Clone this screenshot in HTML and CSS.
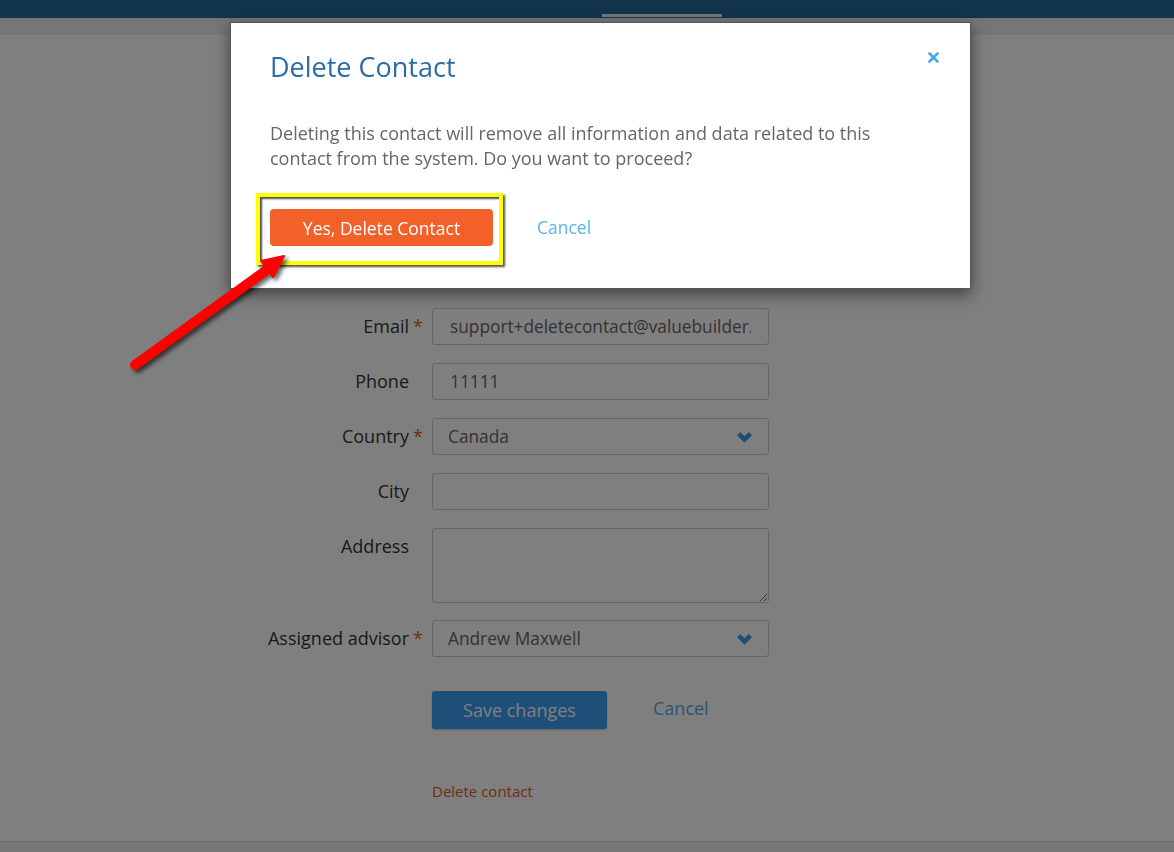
FILE: index.html
```html
<!DOCTYPE html>
<html lang="en">
<head>
  <meta charset="UTF-8">
  <title>Edit contact</title>
  <link rel="stylesheet" href="styles.css">
</head>
<body>

  <div class="topbar">
    <span class="tab-active"></span>
  </div>
  <div class="subbar"></div>

  <div class="contenido">
    <div class="formulario">
      <label class="etiqueta">Email <span class="req">*</span></label>
      <input class="campo" type="text" value="support+deletecontact@valuebuilder.com">

      <label class="etiqueta">Phone</label>
      <input class="campo" type="text" value="11111">

      <label class="etiqueta">Country <span class="req">*</span></label>
      <div class="campo select">
        <span>Canada</span>
        <svg class="chevron" width="15" height="11" viewBox="0 0 15 11"><path d="M1 3.2 L3.2 1 L7.5 5.3 L11.8 1 L14 3.2 L7.5 9.7 Z" fill="#3a9ee6" stroke="#3a9ee6" stroke-width="1.4" stroke-linejoin="round"/></svg>
      </div>

      <label class="etiqueta">City</label>
      <input class="campo" type="text" value="">

      <label class="etiqueta">Address</label>
      <textarea class="campo area"></textarea>

      <label class="etiqueta">Assigned advisor <span class="req">*</span></label>
      <div class="campo select">
        <span>Andrew Maxwell</span>
        <svg class="chevron" width="15" height="11" viewBox="0 0 15 11"><path d="M1 3.2 L3.2 1 L7.5 5.3 L11.8 1 L14 3.2 L7.5 9.7 Z" fill="#3a9ee6" stroke="#3a9ee6" stroke-width="1.4" stroke-linejoin="round"/></svg>
      </div>

      <div></div>
      <div class="acciones">
        <button class="btn-guardar">Save changes</button>
        <a class="enlace">Cancel</a>
      </div>

      <div></div>
      <a class="borrar">Delete contact</a>
    </div>
  </div>

  <div class="pie"></div>

  <!-- fondo oscuro del modal -->
  <div class="overlay"></div>

  <div class="modal">
    <h2>Delete Contact</h2>
    <svg class="cerrar" width="11" height="11" viewBox="0 0 11 11"><path d="M1.5 1.5 L9.5 9.5 M9.5 1.5 L1.5 9.5" stroke="#4aa6ea" stroke-width="2.6" stroke-linecap="round"/></svg>
    <p>Deleting this contact will remove all information and data related to this contact from the system. Do you want to proceed?</p>
    <div class="acciones-modal">
      <button class="btn-borrar">Yes, Delete Contact</button>
      <a class="enlace-modal">Cancel</a>
    </div>
    <!-- recuadro amarillo de la captura -->
    <div class="resaltado"></div>
  </div>

  <svg class="flecha" width="300" height="400" viewBox="0 0 300 400">
    <line x1="135" y1="365" x2="268" y2="269" stroke="#ff0000" stroke-width="10" stroke-linecap="round"/>
    <polygon points="284,256 273,277 261,261" fill="#ff0000" stroke="#ff0000" stroke-width="2" stroke-linejoin="round"/>
  </svg>

</body>
</html>
```

FILE: styles.css
```css
body {
  margin: 0;
  font-family: "Open Sans", "Liberation Sans", sans-serif;
  background: #fff;
  color: #333;
}
.topbar {
  height: 18px;
  background: #24689a;
  position: relative;
}
.tab-active {
  position: absolute;
  left: 602px;
  top: 14px;
  width: 120px;
  height: 3px;
  background: #eee;
}
.subbar {
  height: 17px;
  background: #ececec;
}
.contenido {
  height: 806px;
  padding-top: 273px;
  box-sizing: border-box;
  padding-left: 250px;
}
.formulario {
  display: grid;
  grid-template-columns: 174px 337px;
  column-gap: 8px;
  row-gap: 18px;
  align-items: start;
}
.etiqueta {
  position: relative;
  text-align: right;
  padding-right: 15px;
  font-size: 18px;
  line-height: 36px;
  color: #333;
}
.req {
  position: absolute;
  right: 1px;
  top: 0;
  color: #e8582a;
}
.campo {
  box-sizing: border-box;
  height: 37px;
  width: 337px;
  border: 1px solid #ccc;
  border-radius: 3px;
  padding: 0 17px;
  font-family: "Open Sans", "Liberation Sans", sans-serif;
  font-size: 17.3px;
  color: #666;
  background: #fff;
  margin: 0;
}
.select {
  display: flex;
  align-items: center;
  justify-content: space-between;
  padding-left: 15px;
  padding-right: 16px;
}
.chevron {
  margin-top: 1px;
}
.area {
  height: 75px;
  resize: vertical;
  padding-top: 8px;
  margin-bottom: -1px;
}
.acciones {
  display: flex;
  align-items: center;
  gap: 46px;
  margin-top: 16px;
}
.btn-guardar {
  width: 175px;
  height: 38px;
  border: none;
  border-radius: 3px;
  background: #3a9ef0;
  color: #fff;
  font-family: "Open Sans", "Liberation Sans", sans-serif;
  font-size: 18px;
  box-shadow: 0 1px 2px rgba(0, 0, 0, 0.25);
}
.enlace {
  font-size: 18px;
  color: #5aa8e4;
  margin-top: -4px;
}
.borrar {
  font-size: 15px;
  color: #e8562a;
  margin-top: 34px;
}
.pie {
  border-top: 1px solid #dcdcdc;
  background: #eee;
  height: 40px;
}
.overlay {
  position: fixed;
  left: 0;
  top: 0;
  right: 0;
  bottom: 0;
  background: rgba(0, 0, 0, 0.5);
}
.modal {
  position: absolute;
  left: 230px;
  top: 22px;
  width: 741px;
  height: 267px;
  box-sizing: border-box;
  background: #fff;
  border: 1px solid #555;
  box-shadow: 0 5px 15px rgba(0, 0, 0, 0.5);
  padding: 28px 40px 0 39px;
}
.modal h2 {
  margin: 0;
  font-weight: normal;
  font-size: 27px;
  line-height: 1.2;
  color: #2a6ca6;
}
.cerrar {
  position: absolute;
  right: 31px;
  top: 29px;
}
.modal p {
  margin: 38px 0 0 0;
  font-size: 18px;
  line-height: 25px;
  color: #666;
  width: 640px;
}
.acciones-modal {
  display: flex;
  align-items: center;
  gap: 44px;
  margin-top: 38px;
}
.btn-borrar {
  width: 223px;
  height: 37px;
  border: none;
  border-radius: 4px;
  background: #f3612a;
  color: #fff;
  font-family: "Open Sans", "Liberation Sans", sans-serif;
  font-size: 17.5px;
}
.enlace-modal {
  font-size: 17.5px;
  color: #5ab4ea;
  margin-top: -2px;
}
.resaltado {
  position: absolute;
  left: 25px;
  top: 170px;
  width: 247px;
  height: 72px;
  box-sizing: border-box;
  border: 4px solid #ffff00;
  box-shadow: 2px 2px 2px rgba(0, 0, 0, 0.7), inset 2px 2px 2px rgba(0, 0, 0, 0.7);
}
.flecha {
  position: absolute;
  left: 0;
  top: 0;
  filter: drop-shadow(3px 3px 2px rgba(0, 0, 0, 0.6));
}
```
